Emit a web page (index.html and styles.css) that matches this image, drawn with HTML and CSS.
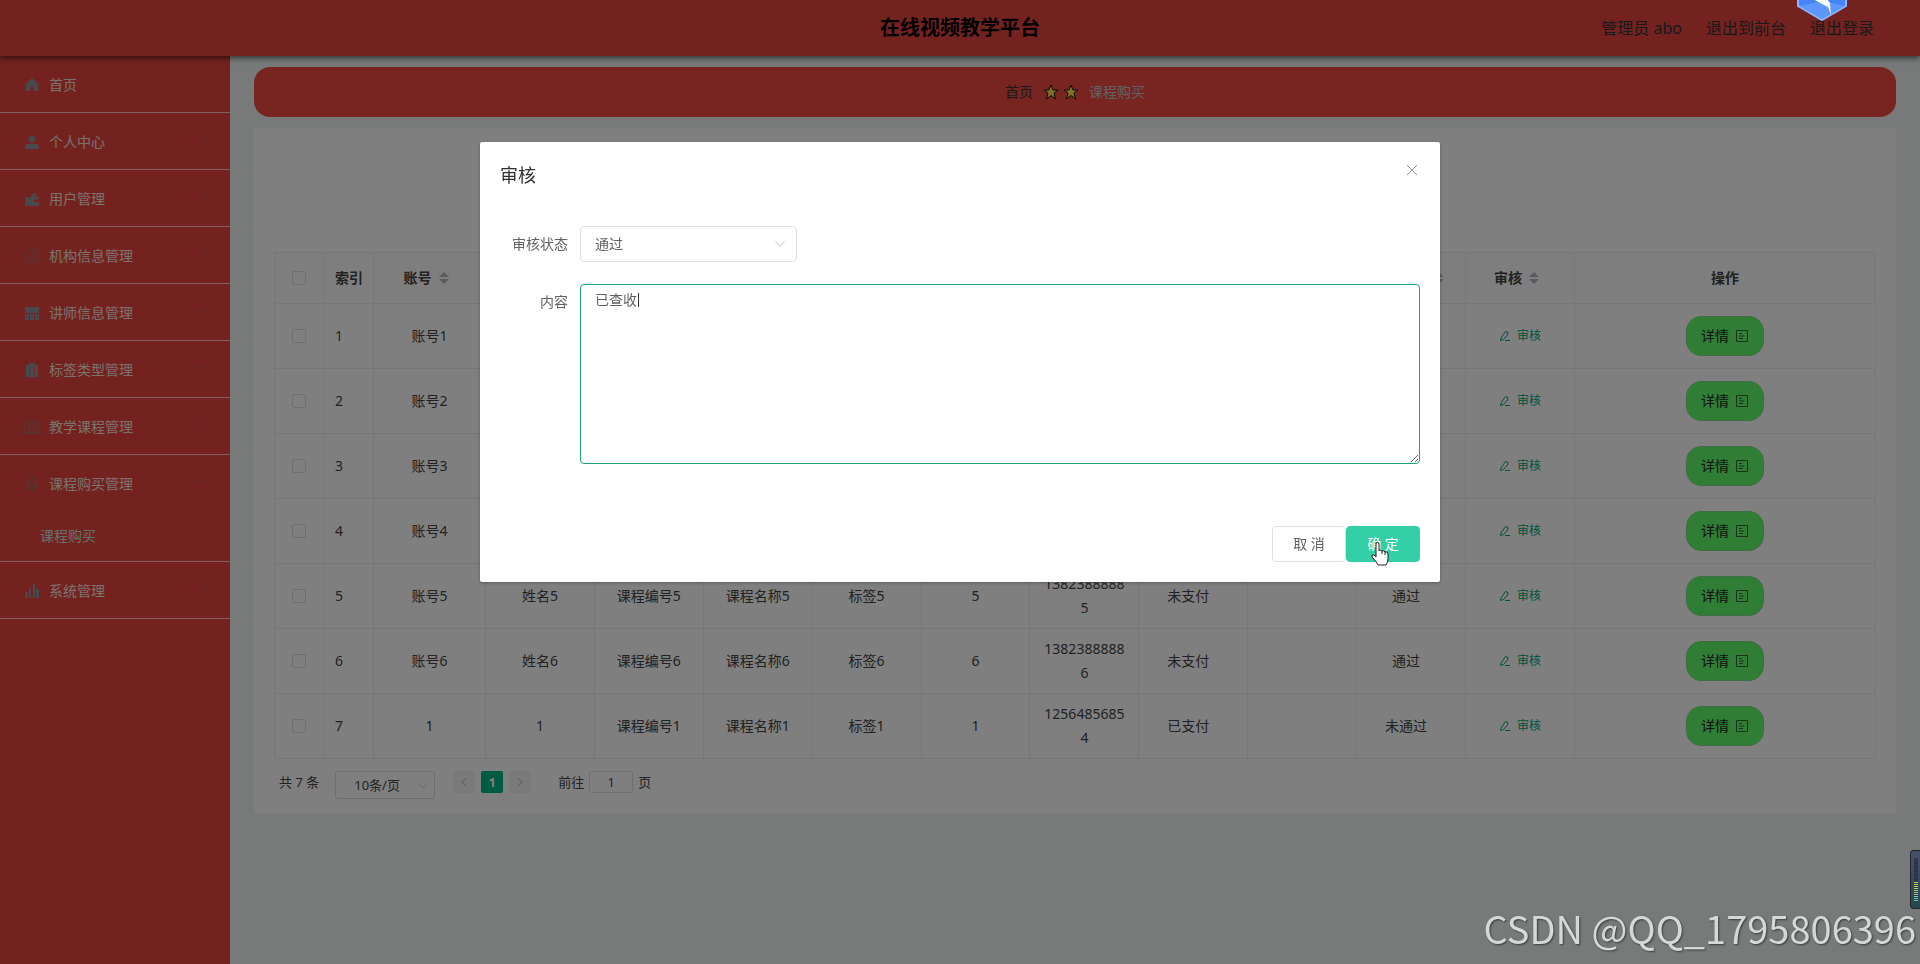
FILE: index.html
```html
<!DOCTYPE html>
<html lang="zh-CN">
<head>
<meta charset="utf-8">
<title>在线视频教学平台</title>
<link rel="stylesheet" href="styles.css">
</head>
<body>
<svg class="sprite" aria-hidden="true">
  <symbol id="chevron" viewBox="0 0 14 14"><path d="M2.500 4.500 7 9.500 11.500 4.500" fill="none" stroke="currentColor"/></symbol>
  <symbol id="pen" viewBox="0 0 12 12"><path d="M2 8 6.500 1.500 9 2.500 8.500 5 4.500 9.500 1.500 10.500zM6 10.500h5" fill="none" stroke="currentColor"/></symbol>
  <symbol id="doc" viewBox="0 0 14 14"><path d="M1.500 1.500h11v11h-11zM4 4.500h3M4 7h5M4 9.500h4" fill="none" stroke="currentColor"/></symbol>
  <symbol id="sort" viewBox="0 0 10 14"><path d="M5 1 10 6H0zM5 13 0 8h10z" fill="currentColor"/></symbol>
  <symbol id="star" viewBox="0 0 16 16"><path d="M8 1 10 6h5l-4 3.200L12.500 15 8 11.500 3.500 15 5 9.200 1 6h5z" fill="#ffe050" stroke="#111" stroke-linejoin="round"/></symbol>
</svg>

<header class="topbar">
  <h1 class="topbar-title">在线视频教学平台</h1>
  <nav class="topbar-links">
    <span>管理员 abo</span>
    <a href="#">退出到前台</a>
    <a href="#">退出登录</a>
  </nav>
</header>

<div class="layout">
  <nav class="sidebar">
    <ul class="menu">
      <li><a class="menu-item" href="#"><svg class="menu-icon" viewBox="0 0 16 16"><path d="M8 1 15 8 14 9v5h-4v-4H6v4H2V9L1 8z"/></svg><span>首页</span></a></li>
      <li><a class="menu-item" href="#"><svg class="menu-icon" viewBox="0 0 16 16"><circle cx="8" cy="5" r="3.500"/><path d="M1 15v-2q0-3 4-3h6q4 0 4 3v2z"/></svg><span>个人中心</span><svg class="menu-arrow"><use href="#chevron"/></svg></a></li>
      <li><a class="menu-item" href="#"><svg class="menu-icon" viewBox="0 0 16 16"><path d="M1 6h4v9H1zM5 8l5-6h3l-2 4h4v2l-5 1v2h5v4H5z"/></svg><span>用户管理</span><svg class="menu-arrow"><use href="#chevron"/></svg></a></li>
      <li><a class="menu-item" href="#"><svg class="menu-icon line" viewBox="0 0 16 16"><path d="M2 14V6l5-4h7v4l-8 8zM5 11l7-7M10 14h4v-4"/></svg><span>机构信息管理</span><svg class="menu-arrow"><use href="#chevron"/></svg></a></li>
      <li><a class="menu-item" href="#"><svg class="menu-icon" viewBox="0 0 16 16"><path d="M1 2h14v6H1zM1 9h4v6H1zM6 9h4v6H6zM11 9h4v6h-4z"/></svg><span>讲师信息管理</span><svg class="menu-arrow"><use href="#chevron"/></svg></a></li>
      <li><a class="menu-item" href="#"><svg class="menu-icon" viewBox="0 0 16 16"><path d="M2 3h3V1h6v2h3v12H2zM5 5v8h1V5zm5 0v8h1V5z" fill-rule="evenodd"/></svg><span>标签类型管理</span><svg class="menu-arrow"><use href="#chevron"/></svg></a></li>
      <li><a class="menu-item" href="#"><svg class="menu-icon line" viewBox="0 0 16 16"><path d="M3 2h10l2 3v9H1V5z"/><circle cx="8" cy="8" r="3.500"/></svg><span>教学课程管理</span><svg class="menu-arrow"><use href="#chevron"/></svg></a></li>
      <li>
        <a class="menu-item" href="#"><svg class="menu-icon line" viewBox="0 0 16 16"><rect x="5" y="1" width="6" height="10" rx="3"/><path d="M3 7v2q0 4 5 4t5-4V7M8 13v3"/></svg><span>课程购买管理</span><svg class="menu-arrow open"><use href="#chevron"/></svg></a>
        <a class="submenu-item" href="#">课程购买</a>
      </li>
      <li><a class="menu-item" href="#"><svg class="menu-icon" viewBox="0 0 16 16"><path d="M1 9h3v6H1zM5 5h2v10H5zM9 1h2v14H9zM12 6h3v9h-3z"/></svg><span>系统管理</span><svg class="menu-arrow"><use href="#chevron"/></svg></a></li>
    </ul>
  </nav>

  <main class="content">
    <nav class="breadcrumb">
      <a href="#">首页</a>
      <span class="stars"><svg><use href="#star"/></svg><svg><use href="#star"/></svg></span>
      <span class="current">课程购买</span>
    </nav>

    <section class="card">
      <table class="grid">
        <colgroup><col class="col-check"><col class="col-index"><col class="col-account"><col span="10"><col class="col-action"></colgroup>
        <thead>
          <tr>
            <th><input type="checkbox" aria-label="全选"></th>
            <th class="index">索引</th>
            <th>账号<svg class="sort"><use href="#sort"/></svg></th>
            <th>姓名<svg class="sort"><use href="#sort"/></svg></th>
            <th>课程编号<svg class="sort"><use href="#sort"/></svg></th>
            <th>课程名称<svg class="sort"><use href="#sort"/></svg></th>
            <th>标签<svg class="sort"><use href="#sort"/></svg></th>
            <th>价格<svg class="sort"><use href="#sort"/></svg></th>
            <th>手机<svg class="sort"><use href="#sort"/></svg></th>
            <th>是否支付<svg class="sort"><use href="#sort"/></svg></th>
            <th>审核回复<svg class="sort"><use href="#sort"/></svg></th>
            <th>审核状态<svg class="sort"><use href="#sort"/></svg></th>
            <th>审核<svg class="sort"><use href="#sort"/></svg></th>
            <th>操作</th>
          </tr>
        </thead>
        <tbody>
          <tr><td><input type="checkbox" aria-label="选择1"></td><td class="index">1</td><td>账号1</td><td>姓名1</td><td>课程编号1</td><td>课程名称1</td><td>标签1</td><td>1</td><td>13823888881</td><td class="state">未支付</td><td></td><td class="state">通过</td><td><button class="link"><svg><use href="#pen"/></svg>审核</button></td><td><button class="detail">详情<svg><use href="#doc"/></svg></button></td></tr>
          <tr><td><input type="checkbox" aria-label="选择2"></td><td class="index">2</td><td>账号2</td><td>姓名2</td><td>课程编号2</td><td>课程名称2</td><td>标签2</td><td>2</td><td>13823888882</td><td class="state">未支付</td><td></td><td class="state">通过</td><td><button class="link"><svg><use href="#pen"/></svg>审核</button></td><td><button class="detail">详情<svg><use href="#doc"/></svg></button></td></tr>
          <tr><td><input type="checkbox" aria-label="选择3"></td><td class="index">3</td><td>账号3</td><td>姓名3</td><td>课程编号3</td><td>课程名称3</td><td>标签3</td><td>3</td><td>13823888883</td><td class="state">未支付</td><td></td><td class="state">通过</td><td><button class="link"><svg><use href="#pen"/></svg>审核</button></td><td><button class="detail">详情<svg><use href="#doc"/></svg></button></td></tr>
          <tr><td><input type="checkbox" aria-label="选择4"></td><td class="index">4</td><td>账号4</td><td>姓名4</td><td>课程编号4</td><td>课程名称4</td><td>标签4</td><td>4</td><td>13823888884</td><td class="state">未支付</td><td></td><td class="state">通过</td><td><button class="link"><svg><use href="#pen"/></svg>审核</button></td><td><button class="detail">详情<svg><use href="#doc"/></svg></button></td></tr>
          <tr><td><input type="checkbox" aria-label="选择5"></td><td class="index">5</td><td>账号5</td><td>姓名5</td><td>课程编号5</td><td>课程名称5</td><td>标签5</td><td>5</td><td>13823888885</td><td class="state">未支付</td><td></td><td class="state">通过</td><td><button class="link"><svg><use href="#pen"/></svg>审核</button></td><td><button class="detail">详情<svg><use href="#doc"/></svg></button></td></tr>
          <tr><td><input type="checkbox" aria-label="选择6"></td><td class="index">6</td><td>账号6</td><td>姓名6</td><td>课程编号6</td><td>课程名称6</td><td>标签6</td><td>6</td><td>13823888886</td><td class="state">未支付</td><td></td><td class="state">通过</td><td><button class="link"><svg><use href="#pen"/></svg>审核</button></td><td><button class="detail">详情<svg><use href="#doc"/></svg></button></td></tr>
          <tr><td><input type="checkbox" aria-label="选择7"></td><td class="index">7</td><td>1</td><td>1</td><td>课程编号1</td><td>课程名称1</td><td>标签1</td><td>1</td><td>12564856854</td><td class="state">已支付</td><td></td><td class="state">未通过</td><td><button class="link"><svg><use href="#pen"/></svg>审核</button></td><td><button class="detail">详情<svg><use href="#doc"/></svg></button></td></tr>
        </tbody>
      </table>

      <div class="pagination">
        <span>共 7 条</span>
        <span class="page-size"><select aria-label="每页条数"><option>10条/页</option></select><svg><use href="#chevron"/></svg></span>
        <span class="pager">
          <button class="page-btn prev" aria-label="上一页"><svg><use href="#chevron"/></svg></button>
          <button class="page-btn active">1</button>
          <button class="page-btn next" aria-label="下一页"><svg><use href="#chevron"/></svg></button>
        </span>
        <label class="jump">前往<input type="text" value="1">页</label>
      </div>
    </section>
  </main>
</div>

<div class="overlay">
  <div class="dialog" role="dialog" aria-labelledby="dialog-title">
    <div class="dialog-head">
      <h2 id="dialog-title">审核</h2>
      <button class="close" aria-label="关闭"><svg viewBox="0 0 12 12"><path d="M1 1 11 11M11 1 1 11" fill="none" stroke="currentColor"/></svg></button>
    </div>
    <form class="dialog-form">
      <div class="field">
        <label for="status">审核状态</label>
        <span class="select-box"><select id="status"><option>通过</option></select><svg><use href="#chevron"/></svg></span>
      </div>
      <div class="field">
        <label for="reply">内容</label>
        <span class="area-box"><textarea id="reply">已查收</textarea><i class="caret"></i></span>
      </div>
    </form>
    <div class="dialog-foot">
      <button class="btn">取 消</button>
      <span class="confirm-box">
        <button class="btn primary">确 定</button>
        <svg class="pointer" viewBox="0 0 20 26"><path d="M6 2q2-2 3 1v7q1-2 3 0 2-1 3 1 3-1 3 2v5q0 3-2 6H8Q6 20 2 16q-1-3 2-2l2 2z" fill="#fff" stroke="#222" stroke-linejoin="round"/><path d="M12 10v3M15 11v3" stroke="#222"/></svg>
      </span>
    </div>
  </div>
</div>

<svg class="float-badge" viewBox="0 0 50 58"><path d="M25 1 49 14v29L25 57 1 43V14z" fill="#4484f5" stroke="#8db8ff" stroke-width="2"/><path d="M2 43 25 38 48 43 25 56z" fill="#5c97f9"/><path d="M28 14 16 36l9 5 6 3 3 8-1-12-3-4z" fill="#fff"/></svg>
<div class="meter"><span></span></div>
<p class="watermark">CSDN @QQ_1795806396</p>
</body>
</html>
```
FILE: styles.css
```css
* { box-sizing: border-box; }
body {
  margin: 0;
  min-height: 100vh;
  display: flex;
  flex-direction: column;
  background: #eef4f1;
  color: #444;
  font: 14px/24px "Noto Sans", "Noto Sans CJK SC", sans-serif;
}
button, input, select, textarea { font: inherit; color: inherit; margin: 0; }
button { border: 0; background: none; padding: 0; }
a { color: inherit; text-decoration: none; }
h1, h2, p, ul { margin: 0; padding: 0; }
ul { list-style: none; }
.sprite { position: absolute; width: 0; height: 0; }

.topbar {
  position: relative;
  height: 56px;
  display: grid;
  grid-template-columns: 1fr auto 1fr;
  align-items: center;
  padding: 0 46px;
  background: #e64440;
  box-shadow: 0 2px 6px rgba(0, 0, 0, .6);
}
.topbar-title { grid-column: 2; font-size: 20px; color: #000; }
.topbar-links { display: flex; justify-content: flex-end; gap: 24px; font-size: 16px; color: #333; }

.layout { flex: 1; display: flex; }
.sidebar { width: 230px; flex: none; background: #e64440; color: #f4e4dc; }
.menu li { border-bottom: 1px solid #ffc0bc; }
.menu-item { display: flex; align-items: center; height: 56px; padding: 2px 20px 0 24px; gap: 9px; }
.menu-icon { width: 16px; height: 16px; fill: #909399; }
.menu-icon.line { fill: none; stroke: #858078; }
.menu-arrow { width: 12px; height: 12px; margin: 0 0 6px auto; color: #b86060; }
.menu-arrow.open { transform: rotate(180deg); }
.submenu-item { display: block; padding: 0 40px; height: 50px; line-height: 50px; color: #c8e2d8; }

.content { flex: 1; min-width: 0; padding: 11px 24px; }
.breadcrumb {
  display: flex;
  justify-content: center;
  align-items: center;
  gap: 10px;
  height: 50px;
  border-radius: 16px;
  background: #f04840;
  color: #333;
}
.stars { display: flex; gap: 4px; }
.stars svg { width: 16px; height: 16px; }
.breadcrumb .current { color: #c0c4cc; }

.card { margin-top: 11px; padding: 124px 20px 14px; background: #fff; }
.grid { width: 100%; table-layout: fixed; border-collapse: collapse; text-align: center; }
.col-check { width: 49px; }
.col-index { width: 50px; }
.col-account { width: 112px; }
.col-action { width: 301px; }
.grid th, .grid td { border: 1px solid #ebeef2; padding: 0 12px; overflow-wrap: anywhere; }
.grid th { height: 51px; padding: 0; background: #fcfcfc; }
.grid td { height: 65px; }
.grid td:first-child { padding: 0; }
.grid td.state { padding-right: 22px; }
.grid .index { text-align: left; padding-left: 11px; }
.grid input {
  appearance: none;
  display: block;
  width: 14px;
  height: 14px;
  margin: 0 auto;
  border: 1px solid #dcdfe6;
  border-radius: 2px;
}
.sort { width: 10px; height: 14px; margin: 0 7px; vertical-align: -2px; color: #b4b8c0; }
.link { display: inline-flex; align-items: center; gap: 6px; font-size: 12px; color: #00a577; }
.link svg { width: 12px; height: 12px; }
.detail {
  display: inline-flex;
  align-items: center;
  justify-content: center;
  gap: 6px;
  width: 78px;
  height: 40px;
  border: 1px solid #80d988;
  border-radius: 15px;
  background: #60fc6c;
  color: #222;
  vertical-align: middle;
}
.detail svg { width: 14px; height: 14px; opacity: .7; }

.pagination { display: flex; align-items: flex-start; height: 41px; padding: 12px 5px 0; font-size: 13px; line-height: 22px; }
.page-size { position: relative; margin-left: 16px; }
.page-size select {
  appearance: none;
  display: block;
  width: 100px;
  height: 28px;
  padding: 0 18px;
  border: 1px solid #dcdfe6;
  border-radius: 3px;
  background: #fff;
}
.page-size svg { position: absolute; right: 6px; top: 9px; width: 12px; height: 12px; color: #c0c4cc; }
.pager { display: flex; gap: 6px; margin-left: 18px; }
.page-btn { display: grid; place-items: center; width: 22px; height: 22px; border-radius: 2px; background: #f4f4f5; color: #aaa; }
.page-btn svg { width: 12px; height: 12px; }
.prev svg { transform: rotate(90deg); }
.next svg { transform: rotate(-90deg); }
.page-btn.active { background: #00b880; color: #fff; font-weight: bold; }
.jump { display: flex; gap: 5px; margin-left: 27px; }
.jump input { width: 44px; height: 22px; padding: 0; border: 1px solid #dcdfe6; border-radius: 3px; background: #fff; text-align: center; }

.overlay { position: fixed; inset: 0; padding-top: 142px; background: rgba(0, 0, 0, .5); }
.dialog { width: 50%; margin: 0 auto; background: #fff; border-radius: 2px; box-shadow: 0 1px 3px rgba(0, 0, 0, .3); color: #606266; }
.dialog-head { display: flex; justify-content: space-between; align-items: flex-start; padding: 20px 20px 8px; }
.dialog-head h2 { font-size: 18px; line-height: 26px; font-weight: normal; color: #303133; }
.close { padding: 2px; color: #909399; }
.close svg { display: block; width: 12px; height: 12px; }
.dialog-form { display: flex; flex-direction: column; gap: 22px; padding: 30px 20px; }
.field { display: flex; }
.field label { width: 80px; flex: none; padding-right: 12px; line-height: 36px; text-align: right; }
.select-box { position: relative; }
.select-box select { appearance: none; display: block; width: 217px; height: 36px; padding: 0 14px; border: 1px solid #dcdfe6; border-radius: 4px; background: #fff; }
.select-box svg { position: absolute; right: 10px; top: 11px; width: 14px; height: 14px; color: #c0c4cc; }
.area-box { position: relative; flex: 1; }
.area-box textarea { display: block; width: 100%; height: 180px; padding: 3px 14px; border: 1px solid #1aa37b; border-radius: 4px; outline: 0; resize: vertical; }
.caret { position: absolute; left: 58px; top: 9px; width: 1px; height: 14px; background: #333; }
.dialog-foot { display: flex; justify-content: flex-end; padding: 32px 20px 20px; }
.btn { width: 74px; height: 36px; border: 1px solid #dcdfe6; border-radius: 4px; background: #fff; }
.btn.primary { border-color: #33cfa6; background: #33cfa6; color: #fff; }
.confirm-box { position: relative; }
.pointer { position: absolute; left: 24px; top: 15px; width: 20px; height: 26px; }

.float-badge { position: fixed; top: -37px; right: 73px; width: 50px; height: 58px; }
.meter { position: fixed; right: 0; top: 850px; width: 10px; height: 59px; padding: 7px 2px 7px 3px; border: 1px solid #20242e; border-right: 0; border-radius: 4px 0 0 4px; background: linear-gradient(#4a5068, #24484c); }
.meter span { display: block; height: 44px; background: repeating-linear-gradient(transparent 0 1px, #2a3040 1px 2px), linear-gradient(#333a60 0 54%, #d8d860 54%, #60d8c8); }
.watermark { position: fixed; right: 4px; bottom: 8px; font: 38px/56px "Noto Sans CJK SC", sans-serif; color: #d6d8d7; text-shadow: 1px 1px 2px rgba(0, 0, 0, .5); }
```
